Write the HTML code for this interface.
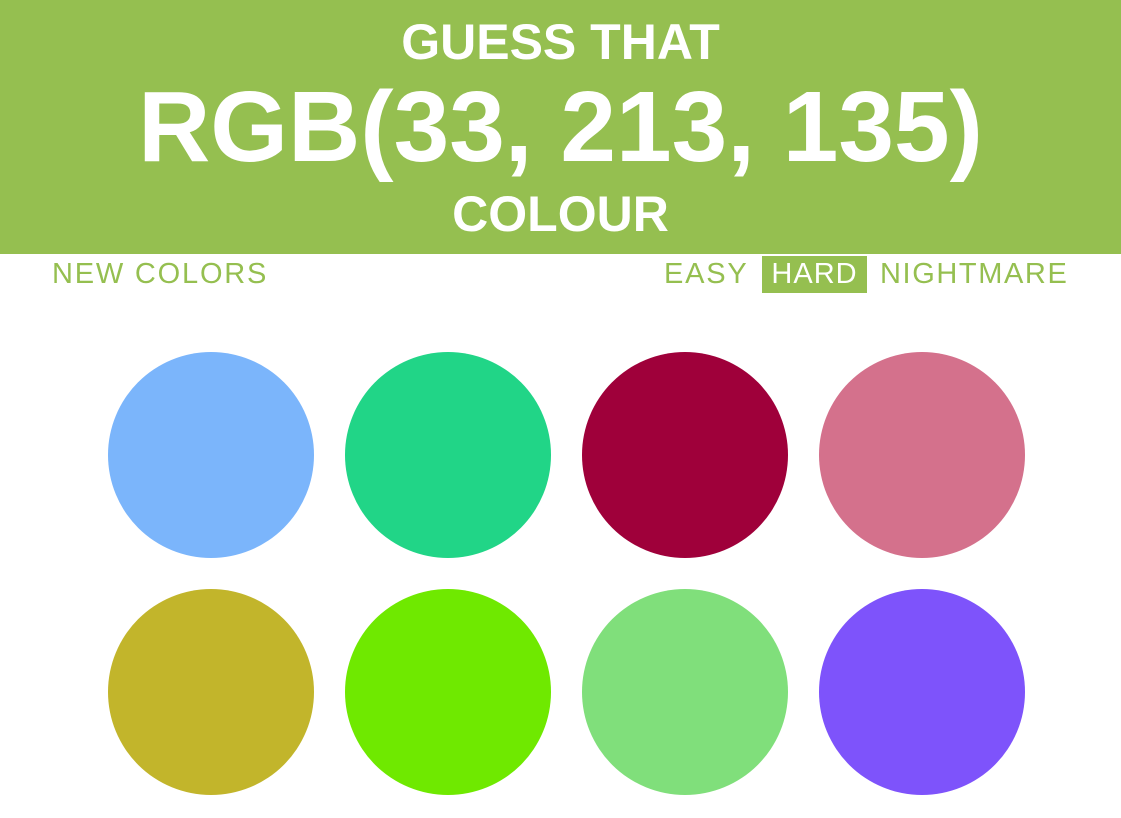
<!DOCTYPE html>
<html><head><style>
body{margin:0;width:1121px;height:818px;background:#fff;font-family:"Liberation Sans",Arial,sans-serif;position:relative;overflow:hidden}
.h{position:absolute;left:0;top:0;width:1121px;height:254px;background:#95bf50}
.t{position:absolute;left:0;width:1121px;text-align:center;color:#fff;font-weight:bold;line-height:1}
.n{position:absolute;top:256px;height:37px;line-height:37px;font-size:29px;color:#95bf50;letter-spacing:1.8px;white-space:nowrap}
.c{position:absolute;width:206px;height:206px;border-radius:50%}
</style></head><body>
<div class="h"></div>
<div class="t" style="top:17px;font-size:50px">GUESS THAT</div>
<div class="t" style="top:77px;font-size:100px">RGB(33, 213, 135)</div>
<div class="t" style="top:189px;font-size:50px">COLOUR</div>
<div class="n" style="left:52px">NEW COLORS</div>
<div class="n" style="left:664px">EASY</div>
<div class="n" style="left:762px;width:105px;background:#95bf50;color:#fff;text-align:center;letter-spacing:1px">HARD</div>
<div class="n" style="left:880px;letter-spacing:1.6px">NIGHTMARE</div>
<div class="c" style="left:108px;top:352px;background:#7bb5fb"></div>
<div class="c" style="left:345px;top:352px;background:#21d587"></div>
<div class="c" style="left:582px;top:352px;background:#9f003a"></div>
<div class="c" style="left:819px;top:352px;background:#d4718c"></div>
<div class="c" style="left:108px;top:589px;background:#c2b52b"></div>
<div class="c" style="left:345px;top:589px;background:#6fe900"></div>
<div class="c" style="left:582px;top:589px;background:#80df7b"></div>
<div class="c" style="left:819px;top:589px;background:#7e53fb"></div>
</body></html>
